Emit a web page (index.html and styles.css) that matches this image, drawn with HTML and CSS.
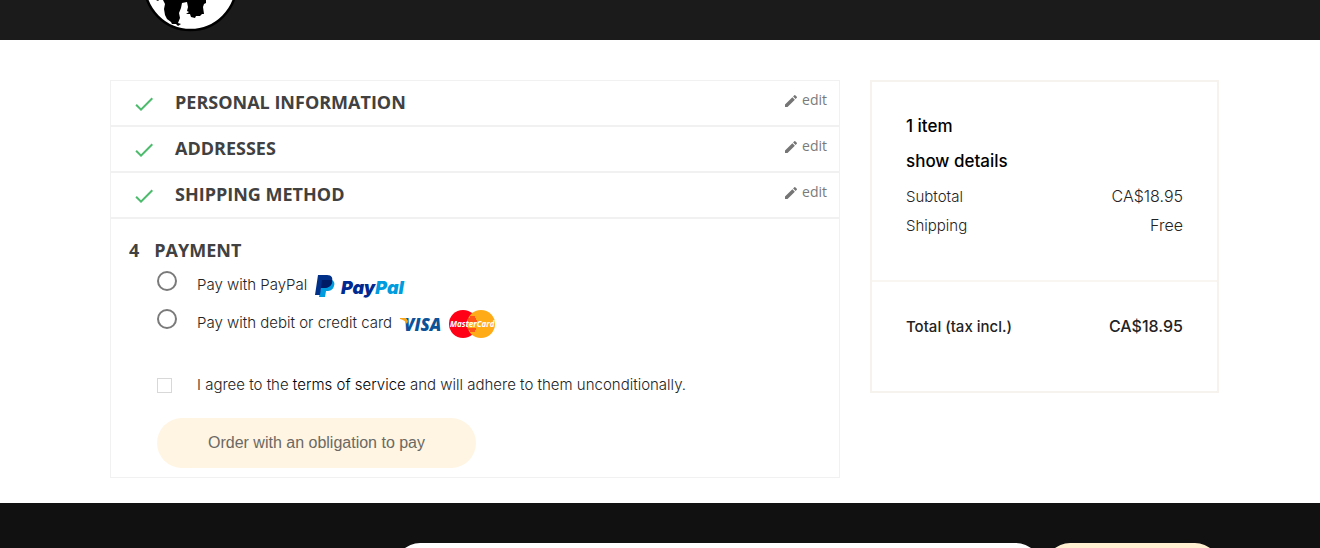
FILE: index.html
```html
<!DOCTYPE html>
<html lang="en">
<head>
  <meta charset="UTF-8" />
  <meta name="viewport" content="width=device-width, initial-scale=1.0"/>
  <title>Checkout</title>
  <link rel="stylesheet" href="styles.css">
</head>
<body>
  <!-- shared icons -->
  <svg class="sprite" aria-hidden="true">
    <symbol id="icon-check" viewBox="0 0 24 24">
      <path d="M9 16.17L4.83 12l-1.42 1.41L9 19 21 7l-1.41-1.41z"/>
    </symbol>
    <symbol id="icon-edit" viewBox="0 0 24 24">
      <path d="M3 17.25V21h3.75L17.81 9.94l-3.75-3.75L3 17.25zM20.71 7.04a1 1 0 0 0 0-1.41l-2.34-2.34a1 1 0 0 0-1.41 0l-1.83 1.83 3.75 3.75 1.83-1.83z"/>
    </symbol>
  </svg>

  <header class="header">
    <a class="logo" href="#" aria-label="Home">
      <svg width="98" height="34" viewBox="0 0 98 34">
        <circle cx="48.5" cy="-16" r="46" fill="#fff" stroke="#000" stroke-width="2.5"/>
        <path d="M21 0L23 4 22 9 23 15 25 19 29 22 30 24 34 24 36 26 39 24 36 23 38 18 37 13 39 8 40 3 45 2 46 7 45 11 47 12 44 14 48 14 49 17 53 18 54 16 58 16 60 14 62 14 61 7 62 4 64 3 64 0z"/>
        <path d="M14 0h3l-1 1z"/>
      </svg>
    </a>
  </header>

  <main class="checkout">
    <div class="steps">
      <section class="step">
        <svg class="check"><use href="#icon-check"/></svg>
        <h1>PERSONAL INFORMATION</h1>
        <a class="edit" href="#"><svg><use href="#icon-edit"/></svg>edit</a>
      </section>
      <section class="step">
        <svg class="check"><use href="#icon-check"/></svg>
        <h1>ADDRESSES</h1>
        <a class="edit" href="#"><svg><use href="#icon-edit"/></svg>edit</a>
      </section>
      <section class="step">
        <svg class="check"><use href="#icon-check"/></svg>
        <h1>SHIPPING METHOD</h1>
        <a class="edit" href="#"><svg><use href="#icon-edit"/></svg>edit</a>
      </section>

      <section class="payment">
        <h1><span class="number">4</span>PAYMENT</h1>
        <form class="options">
          <div class="option">
            <input type="radio" name="payment" id="pay-paypal">
            <label for="pay-paypal">Pay with PayPal
              <svg width="96" height="26" viewBox="0 0 96 26">
                <path fill="#009cde" d="M7 8h10c2 1 3 3 2 6-1 4-4 5-7 5h-1l-1 6H4z"/>
                <path fill="#003087" d="M3 3h9c5 0 6 3 5 7s-4 6-8 6H6l-1 7H0z"/>
                <path fill="#001c64" d="M7 8h10c1 4-2 8-8 8H6z"/>
                <text class="paypal-text" x="26" y="22"><tspan fill="#002991">Pay</tspan><tspan fill="#009cde">Pal</tspan></text>
              </svg>
            </label>
          </div>
          <div class="option">
            <input type="radio" name="payment" id="pay-card">
            <label for="pay-card">Pay with debit or credit card
              <svg width="97" height="30" viewBox="0 0 97 30">
                <text class="visa-text" x="4" y="23">VISA</text>
                <path fill="#f9a51a" d="M0 10h6l2 3-1 3Q5 12 0 11z"/>
                <circle cx="63" cy="16" r="14" fill="#ff0016"/>
                <circle cx="81" cy="16" r="14" fill="#ffab17"/>
                <path stroke="#ff0016" d="M70 9h5M68 11h8M68 13h9M68 21h8M70 23h5"/>
                <text class="mastercard-text" x="50" y="19">MasterCard</text>
              </svg>
            </label>
          </div>
          <div class="option terms">
            <input type="checkbox" id="terms">
            <label for="terms">I agree to the <a href="#">terms of service</a> and will adhere to them unconditionally.</label>
          </div>
          <button class="order" type="submit" disabled>Order with an obligation to pay</button>
        </form>
      </section>
    </div>

    <aside class="summary">
      <div class="summary-items">
        <p class="strong">1 item</p>
        <p><a class="strong" href="#">show details</a></p>
        <div class="line"><span>Subtotal</span><span class="value">CA$18.95</span></div>
        <div class="line"><span>Shipping</span><span class="value">Free</span></div>
      </div>
      <div class="summary-total">
        <div class="line total"><span>Total (tax incl.)</span><span class="value">CA$18.95</span></div>
      </div>
    </aside>
  </main>

  <footer class="footer">
    <form class="newsletter">
      <input type="email" aria-label="Email address">
      <button type="submit" aria-label="Subscribe"></button>
    </form>
  </footer>
</body>
</html>
```
FILE: styles.css
```css
* {
  box-sizing: border-box;
}

body {
  margin: 0;
  height: 100vh;
  display: flex;
  flex-direction: column;
  overflow: hidden;
  background: #fff;
  color: #232323;
  font-family: Inter, 'Liberation Sans', sans-serif;
  font-size: 15px;
  font-weight: 300;
}

h1,
p {
  margin: 0;
}

a {
  color: inherit;
  text-decoration: none;
}

svg {
  display: block;
}

.sprite {
  display: none;
}

.header {
  flex: none;
  height: 40px;
  padding-left: 142px;
  background: #1b1b1b;
}

.logo {
  display: inline-block;
}

.checkout {
  display: grid;
  grid-template-columns: 730fr 349fr;
  gap: 30px;
  align-items: start;
  padding: 40px 101px 25px 110px;
}

/* steps */
.step {
  display: flex;
  align-items: flex-start;
  height: 46px;
  padding: 9px 12px 0 21px;
  border: 1px solid #f1f1f1;
}

.steps h1 {
  color: #414141;
  font-family: 'Open Sans', sans-serif;
  font-size: 18px;
  font-weight: 700;
  line-height: 24px;
}

.check {
  width: 24px;
  height: 24px;
  margin: 2px 19px 0 0;
  fill: #4cbb6c;
}

.edit {
  display: flex;
  align-items: flex-start;
  gap: 3px;
  margin-left: auto;
  color: #7a7a7a;
  font-family: 'Open Sans', sans-serif;
  font-size: 14px;
  font-weight: 400;
  line-height: 20px;
}

.edit svg {
  width: 16px;
  height: 16px;
  margin-top: 3px;
  fill: #757575;
}

.payment {
  padding: 19px 18px 9px;
  border: 1px solid #f1f1f1;
}

.number {
  margin-right: 15px;
}

.options {
  padding-left: 28px;
}

.option {
  display: flex;
  align-items: flex-start;
  gap: 20px;
  height: 38px;
}

.option input {
  flex: none;
  appearance: none;
  width: 20px;
  height: 20px;
  margin: 9px 0 0;
  border: 2px solid #7a7a7a;
  border-radius: 50%;
  background: #fff;
}

.option label {
  display: flex;
  align-items: center;
  gap: 8px;
  padding-top: 8px;
  line-height: 30px;
  white-space: nowrap;
}

.option.terms {
  gap: 25px;
  height: 53px;
  margin-top: 27px;
}

.terms label {
  display: block;
  padding-top: 10px;
  line-height: 20px;
}

.terms a {
  color: #000;
}

.terms input {
  width: 15px;
  height: 15px;
  margin-top: 13px;
  border: 1px solid #d8d8d8;
  border-radius: 0;
}

.order {
  display: block;
  height: 50px;
  padding: 0 51px;
  border: 0;
  border-radius: 25px;
  background: #fff5e2;
  color: #6b6964;
  font-family: 'Liberation Sans', Arial, sans-serif;
  font-size: 16px;
}

.paypal-text {
  font-family: Inter, sans-serif;
  font-size: 18px;
  font-style: italic;
  font-weight: 900;
}

.visa-text {
  fill: #0b5299;
  font-family: 'Open Sans', sans-serif;
  font-size: 17px;
  font-style: italic;
  font-weight: 800;
}

.mastercard-text {
  fill: #fff;
  font-family: 'Open Sans', sans-serif;
  font-size: 8px;
  font-style: italic;
  font-weight: 700;
}

/* order summary */
.summary {
  border: 2px solid #f6f2ee;
}

.summary-items {
  height: 200px;
  padding: 27px 34px;
  border-bottom: 2px solid #f9f6f1;
}

.strong {
  color: #000;
  font-size: 17px;
  font-weight: 500;
  line-height: 35px;
}

.line {
  display: flex;
  align-items: center;
  justify-content: space-between;
  line-height: 29px;
}

p + .line {
  margin-top: 3px;
}

.value {
  font-size: 16px;
}

.summary-total {
  height: 109px;
  padding: 30px 34px;
}

.total {
  font-weight: 500;
}

/* footer */
.footer {
  flex: 1;
  min-height: 0;
  overflow: hidden;
  padding: 40px 100px 0 395px;
  background: #111;
}

.newsletter {
  display: grid;
  grid-template-columns: 646fr 175fr;
  gap: 4px;
}

.newsletter input,
.newsletter button {
  height: 50px;
  border: 0;
  border-radius: 25px;
  background: #fff;
}

.newsletter button {
  background: #fff0d2;
}
```
